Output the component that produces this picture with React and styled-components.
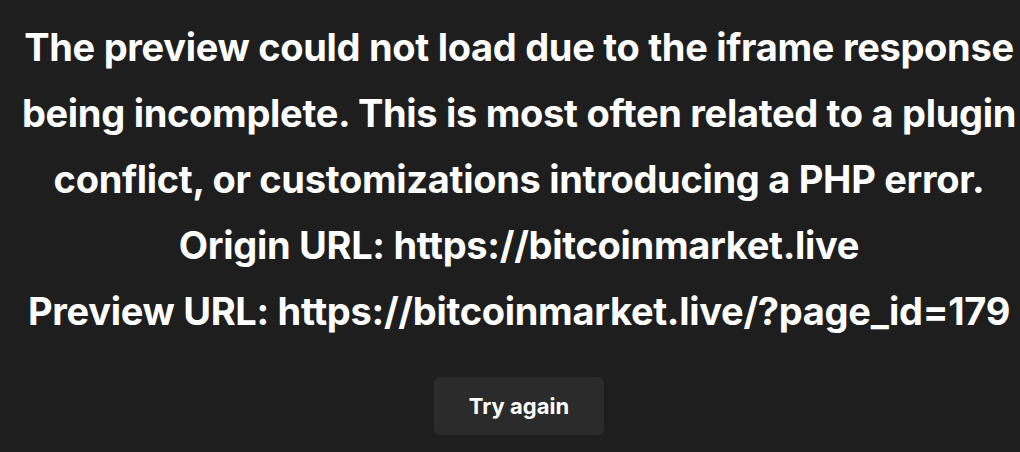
import React from "react";
import styled, { createGlobalStyle } from "styled-components";

const Global = createGlobalStyle`
  html, body { margin: 0; padding: 0; background: #1e1e1e; }
  body { font-family: Inter, "Noto Sans", "Liberation Sans", sans-serif; }
`;

const Page = styled.div`
  width: 1020px;
  height: 452px;
  background: #1e1e1e;
  color: #ffffff;
  display: flex;
  flex-direction: column;
  align-items: center;
  padding: 14px 0 0 18px;
  box-sizing: border-box;
  overflow: hidden;
`;

const Message = styled.div`
  display: flex;
  flex-direction: column;
  align-items: center;
  font-size: 38px;
  font-weight: 700;
  line-height: 66px;
  letter-spacing: -0.3px;
`;

const Line = styled.div`
  white-space: nowrap;
`;

const Button = styled.button`
  margin-top: 33px;
  width: 170px;
  height: 58px;
  border: none;
  border-radius: 6px;
  background: #2b2b2b;
  color: #ffffff;
  font-family: Inter, "Noto Sans", "Liberation Sans", sans-serif;
  font-size: 22px;
  font-weight: 700;
  cursor: pointer;
`;

export default function App() {
  return (
    <>
      <Global />
      <Page>
        <Message>
          <Line>The preview could not load due to the iframe response</Line>
          <Line>being incomplete. This is most often related to a plugin</Line>
          <Line>conflict, or customizations introducing a PHP error.</Line>
          <Line>Origin URL: https://bitcoinmarket.live</Line>
          <Line>Preview URL: https://bitcoinmarket.live/?page_id=179</Line>
        </Message>
        <Button>Try again</Button>
      </Page>
    </>
  );
}
